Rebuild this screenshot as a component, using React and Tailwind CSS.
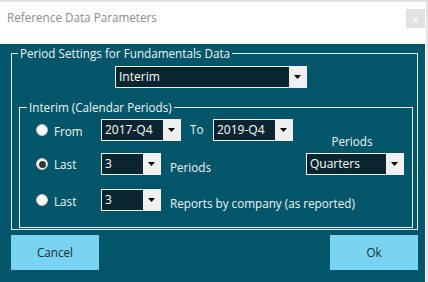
import React from "react";

const Arrow = () => (
  <svg width="7" height="4" viewBox="0 0 7 4">
    <path d="M0 0H7L3.5 4Z" fill="#000" />
  </svg>
);

const Combo = ({ value, className }) => (
  <div className={`flex h-[22px] border border-[#f2f2f2] bg-[#0a2530] ${className}`}>
    <div className="flex-1 pl-[3px] text-[12px] leading-[19px] text-white">{value}</div>
    <div className="flex w-[17px] items-center justify-center bg-[#f0f0f0]">
      <Arrow />
    </div>
  </div>
);

const Radio = ({ checked }) => (
  <div className="flex h-[12px] w-[12px] items-center justify-center rounded-full border border-[#bfbfbf] bg-white">
    {checked && <div className="h-[7px] w-[7px] rounded-full bg-[#333]" />}
  </div>
);

const App = () => {
  return (
    <div
      className="h-[282px] w-[428px] overflow-hidden bg-[#e3e3e3] pt-[2px]"
      style={{ fontFamily: '"Open Sans", "Noto Sans", sans-serif' }}
    >
      <div className="w-[426px] bg-white">
        <div className="flex h-[30px] items-start justify-between pl-[7px]">
          <span className="mt-[6px] text-[11.7px] leading-[18px] text-[#8c8c8c]">Reference Data Parameters</span>
          <div className="mr-[1px] mt-[7px] flex h-[19px] w-[19px] items-center justify-center bg-[#e1e1e1] text-[11px] font-bold leading-none text-[#f5f5f5]">
            x
          </div>
        </div>
        <div className="h-[248px] w-[425px] bg-[#03566a] pl-[11px] text-[11.7px] text-[#eef4f5]">
          <fieldset className="mt-[12px] w-[407px] border border-[#e6eef0]">
            <legend className="ml-[6px] px-[2px] leading-[18px]">Period Settings for Fundamentals Data</legend>
            <Combo value="Interim" className="ml-[103px] mt-[4px] w-[192px]" />
            <fieldset className="mb-[1px] ml-[7px] mt-[10px] w-[394px] border border-[#e6eef0] pb-[16px]">
              <legend className="ml-[7px] px-[2px] leading-[18px]">Interim (Calendar Periods)</legend>
              <div className="mt-[3px] flex h-[22px] items-center pl-[16px]">
                <Radio />
                <span className="ml-[6px] mt-[3px] w-[47px]">From</span>
                <Combo value="2017-Q4" className="w-[80px]" />
                <span className="ml-[9px] w-[23px]">To</span>
                <Combo value="2019-Q4" className="w-[80px]" />
              </div>
              <div className="mt-[12px] flex h-[22px] items-end pl-[16px] pr-[8px]">
                <div className="flex h-[22px] items-center">
                  <Radio checked />
                  <span className="ml-[6px] mt-[2px] w-[47px]">Last</span>
                  <Combo value="3" className="w-[60px]" />
                  <span className="ml-[9px] mt-[8px]">Periods</span>
                </div>
                <div className="-mt-[20px] ml-auto flex flex-col items-center gap-[4px]">
                  <span className="pr-[6px] leading-[16px]">Periods</span>
                  <Combo value="Quarters" className="w-[98px]" />
                </div>
              </div>
              <div className="mt-[14px] flex h-[22px] items-center pl-[16px]">
                <Radio />
                <span className="ml-[6px] mt-[3px] w-[47px]">Last</span>
                <Combo value="3" className="w-[60px]" />
                <span className="ml-[9px] mt-[8px]">Reports by company (as reported)</span>
              </div>
            </fieldset>
          </fieldset>
          <div className="mt-[5px] flex w-[407px] justify-between">
            <button className="h-[35px] w-[88px] bg-[#78d4f1] text-[11.7px] text-[#1b2a30]">Cancel</button>
            <button className="h-[35px] w-[88px] bg-[#78d4f1] text-[11.7px] text-[#1b2a30]">Ok</button>
          </div>
        </div>
      </div>
    </div>
  );
};

export default App;
